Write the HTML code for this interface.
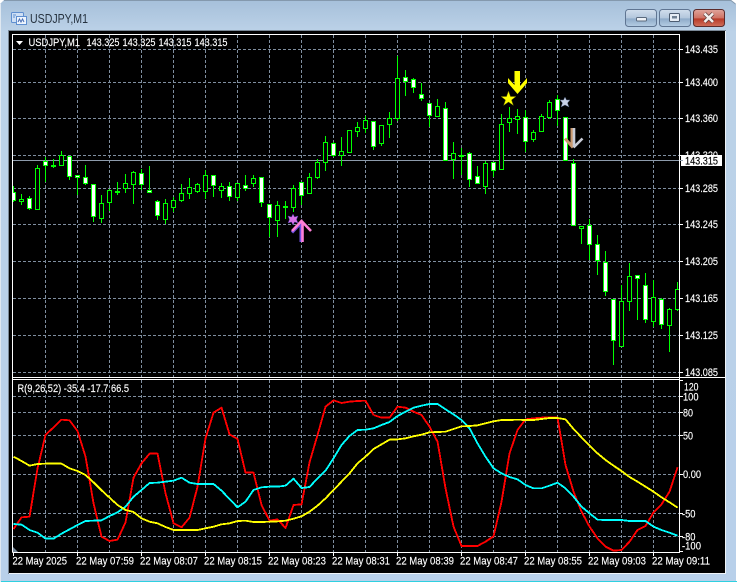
<!DOCTYPE html>
<html><head><meta charset="utf-8"><title>USDJPY,M1</title>
<style>html,body{margin:0;padding:0;background:#fff;overflow:hidden}svg{display:block}
text{font-family:"Liberation Sans",sans-serif;fill:#fff;font-size:11px;stroke:#fff;stroke-width:.15px}</style></head>
<body>
<svg width="737" height="582" viewBox="0 0 737 582" xmlns="http://www.w3.org/2000/svg">
<defs>
<linearGradient id="tb" x1="0" y1="0" x2="0" y2="1"><stop offset="0" stop-color="#a6c0da"/><stop offset=".055" stop-color="#bcd2e8"/><stop offset="1" stop-color="#b8d0ea"/></linearGradient>
<linearGradient id="bt" x1="0" y1="0" x2="0" y2="1"><stop offset="0" stop-color="#d2dfed"/><stop offset=".5" stop-color="#b2c6dc"/><stop offset=".55" stop-color="#8fabc9"/><stop offset="1" stop-color="#b5cde4"/></linearGradient>
<linearGradient id="cl" x1="0" y1="0" x2="0" y2="1"><stop offset="0" stop-color="#e0a59c"/><stop offset=".5" stop-color="#cf7264"/><stop offset=".55" stop-color="#b83a28"/><stop offset="1" stop-color="#d0705c"/></linearGradient>
<clipPath id="m"><rect x="13" y="35" width="666" height="342"/></clipPath>
<clipPath id="s"><rect x="13" y="380" width="666" height="172"/></clipPath>
</defs>
<path d="M4 0H731L736 4V582H0V4Z" fill="url(#tb)"/>
<path d="M4 .5H731L735.5 4" fill="none" stroke="#8499ad"/>
<rect x="0" y="581" width="737" height="1" fill="#2fd0e0"/>
<rect x="0" y="4" width="1" height="578" fill="#dfe8f1"/>
<!-- title icon -->
<rect x="11.5" y="12.5" width="12" height="10" rx="1" fill="#cfe0f5" stroke="#5f8fd0"/>
<rect x="16.5" y="16.5" width="10" height="8" fill="#eef5fd" stroke="#5f8fd0"/>
<path d="M18 22l1.500-3 1.500 3 1.500-3 1.500 3" fill="none" stroke="#4a6fb5"/>
<path d="M13 15h3M13 17h2" stroke="#5f8fd0"/>
<text x="30" y="23" textLength="58" lengthAdjust="spacingAndGlyphs" style="fill:#26323f;stroke:none;font-size:12.5px">USDJPY,M1</text>
<!-- window buttons -->
<rect x="625.500" y="9.500" width="31" height="17" rx="3" fill="url(#bt)" stroke="#5f7592"/>
<rect x="636.500" y="17.500" width="10" height="3.500" rx="1" fill="#eef2f7" stroke="#5a6a7e"/>
<rect x="659.500" y="9.500" width="31" height="17" rx="3" fill="url(#bt)" stroke="#5f7592"/>
<rect x="669.500" y="13.500" width="10" height="8" rx="1" fill="#e6edf5" stroke="#4d5d72"/>
<rect x="672" y="16" width="5" height="2.500" fill="#6f8093"/>
<rect x="693.500" y="9.500" width="31" height="17" rx="3" fill="url(#cl)" stroke="#5c2c2c"/>
<path d="M704.500 13.500l8.500 8.500M713 13.500l-8.500 8.500" stroke="#5b3a3a" stroke-width="4"/>
<path d="M704.500 13.500l8.500 8.500M713 13.500l-8.500 8.500" stroke="#f4f0ee" stroke-width="2.600"/>
<!-- client -->
<rect x="8" y="30" width="718" height="544" fill="#eef3f8"/>
<path d="M8.500 574V30.500H726" fill="none" stroke="#7a8896"/>
<rect x="9" y="31" width="716" height="542" fill="#000"/>
<!-- grid -->
<g stroke="#7f8e9f" fill="none" stroke-dasharray="3 2">
<path d="M13 49.500H679M13 82.500H679M13 118.500H679M13 155.500H679M13 188.500H679M13 224.500H679M13 261.500H679M13 298.500H679M13 335.500H679M13 372.500H679"/>
<path d="M45.500 35V377M77.500 35V377M109.500 35V377M141.500 35V377M173.500 35V377M205.500 35V377M237.500 35V377M269.500 35V377M301.500 35V377M333.500 35V377M365.500 35V377M397.500 35V377M429.500 35V377M461.500 35V377M493.500 35V377M525.500 35V377M557.500 35V377M589.500 35V377M621.500 35V377M653.500 35V377"/>
<path d="M13 396.500H679M13 412.500H679M13 435.500H679M13 474.500H679M13 513.500H679M13 536.500H679"/>
<path d="M45.500 380V552M77.500 380V552M109.500 380V552M141.500 380V552M173.500 380V552M205.500 380V552M237.500 380V552M269.500 380V552M301.500 380V552M333.500 380V552M365.500 380V552M397.500 380V552M429.500 380V552M461.500 380V552M493.500 380V552M525.500 380V552M557.500 380V552M589.500 380V552M621.500 380V552M653.500 380V552"/>
</g>
<path d="M13 160.500H679" stroke="#8d9bab"/>
<!-- candles -->
<g clip-path="url(#m)" shape-rendering="crispEdges" stroke="#0f0">
<path fill="none" d="M13.500 186V202M21.500 194V205M29.500 196V210M37.500 165V210M45.500 157V182M53.500 159V168M61.500 151V156M69.500 156V180M77.500 175V195M85.500 165V185M93.500 184V222M101.500 195V223M109.500 189V211M117.500 182V195M125.500 174V193M133.500 171V204M141.500 169V190M149.500 166V193M157.500 200V220M165.500 199V224M173.500 197V212M181.500 184V202M189.500 178V199M197.500 183V193M205.500 170V199M213.500 175V197M221.500 183V198M229.500 182V201M237.500 183V201M245.500 175V191M253.500 175V187M261.500 177V207M269.500 204V237M277.500 201V237M285.500 201V219M293.500 185V212M301.500 182V205M309.500 173V194M317.500 159V179M325.500 136V171M333.500 142V157M341.500 137V166M349.500 130V153M357.500 122V137M365.500 116V133M373.500 121V150M381.500 125V146M389.500 112V138M397.500 56V121M405.500 70V96M413.500 78V93M421.500 83V101M429.500 103V127M437.500 99V117M445.500 102V161M453.500 142V179M461.500 148V175M469.500 152V187M477.500 166V184M485.500 161V194M493.500 162V177M501.500 114V170M509.500 107V132M517.500 109V134M525.500 110V152M533.500 130V142M541.500 114V132M549.500 100V119M557.500 95V126M565.500 117V161M573.500 159V226M581.500 226V244M589.500 219V260M597.500 235V275M605.500 251V296M613.500 299V365M621.500 285V347M629.500 263V311M637.500 275V320M645.500 273V323M653.500 280V327M661.500 298V329M669.500 308V352M677.500 282V311"/>
<path fill="#fff" d="M11.500 192.500h4v8h-4zM27.500 198.500h4v10h-4zM43.500 161.500h4v4h-4zM67.500 156.500h4v20h-4zM75.500 175.500h4v2h-4zM83.500 177.500h4v6h-4zM91.500 184.500h4v32h-4zM139.500 173.500h4v11h-4zM147.500 190.500h4v2h-4zM155.500 201.500h4v14h-4zM211.500 175.500h4v10h-4zM227.500 186.500h4v10h-4zM243.500 185.500h4v3h-4zM259.500 177.500h4v25h-4zM267.500 204.500h4v13h-4zM299.500 182.500h4v13h-4zM331.500 143.500h4v12h-4zM371.500 121.500h4v25h-4zM403.500 77.500h4v4h-4zM411.500 79.500h4v8h-4zM419.500 94.500h4v4h-4zM427.500 103.500h4v12h-4zM443.500 108.500h4v52h-4zM467.500 153.500h4v26h-4zM475.500 176.500h4v7h-4zM491.500 162.500h4v8h-4zM523.500 117.500h4v24h-4zM555.500 99.500h4v11h-4zM563.500 117.500h4v43h-4zM571.500 163.500h4v62h-4zM587.500 225.500h4v19h-4zM595.500 244.500h4v16h-4zM603.500 262.500h4v29h-4zM611.500 299.500h4v41h-4zM635.500 275.500h4v3h-4zM643.500 285.500h4v34h-4zM659.500 299.500h4v25h-4z"/>
<path fill="#000" d="M19.500 199.500h4v2h-4zM35.500 168.500h4v41h-4zM51.500 165.500h4v1h-4zM59.500 155.500h4v10h-4zM99.500 203.500h4v15h-4zM107.500 190.500h4v12h-4zM115.500 191.500h4v1h-4zM123.500 183.500h4v5h-4zM131.500 172.500h4v12h-4zM163.500 203.500h4v16h-4zM171.500 200.500h4v7h-4zM179.500 193.500h4v7h-4zM187.500 187.500h4v6h-4zM195.500 184.500h4v7h-4zM203.500 175.500h4v16h-4zM219.500 186.500h4v4h-4zM235.500 183.500h4v14h-4zM251.500 178.500h4v5h-4zM275.500 205.500h4v15h-4zM283.500 206.500h4v1h-4zM291.500 188.500h4v19h-4zM307.500 177.500h4v16h-4zM315.500 162.500h4v15h-4zM323.500 142.500h4v20h-4zM339.500 151.500h4v4h-4zM347.500 130.500h4v22h-4zM355.500 127.500h4v4h-4zM363.500 120.500h4v8h-4zM379.500 125.500h4v18h-4zM387.500 118.500h4v6h-4zM395.500 78.500h4v40h-4zM435.500 106.500h4v10h-4zM451.500 153.500h4v6h-4zM459.500 155.500h4v1h-4zM483.500 163.500h4v23h-4zM499.500 124.500h4v45h-4zM507.500 118.500h4v4h-4zM515.500 116.500h4v3h-4zM531.500 132.500h4v7h-4zM539.500 116.500h4v15h-4zM547.500 102.500h4v15h-4zM579.500 226.500h4v2h-4zM619.500 301.500h4v45h-4zM627.500 276.500h4v25h-4zM651.500 297.500h4v24h-4zM667.500 309.500h4v16h-4zM675.500 289.500h4v20h-4z"/>
</g>
<!-- markers -->
<polygon points="514.500,71 520,71 520,86 527,78 527,83 517.500,94 508,83 508,78 514.500,85" fill="#ff0"/>
<polygon points="508.500,91 510.500,96.500 516,96.500 511.500,100 513.500,105.500 508.500,102 503.500,105.500 505.500,100 501,96.500 506.500,96.500" fill="#ff0" stroke="#5c5c00" stroke-width=".5"/>
<polygon points="565,97 566.500,100 570,100 567.500,103 569,107 565,105 561,107 562.500,103 560,100 563.500,100" fill="#c9d2e6" stroke="#4a5a78" stroke-width=".5"/>
<path d="M572 128V147M565 138.500L573 147.500" fill="none" stroke="#c99a70" stroke-width="3"/>
<path d="M574 128V147M573.500 147.500L582.500 138.500" fill="none" stroke="#c9ccd6" stroke-width="2.600"/>
<path d="M292 232.500L301 223V242" fill="none" stroke="#7050e0" stroke-width="3"/>
<path d="M292 231L301.500 221L311 231M302.500 222V242" fill="none" stroke="#ff80d8" stroke-width="2.600"/>
<polygon points="293,214 294.500,217 298,216 296.500,219.500 298,223 294.500,222 293,225 291.500,222 288,223 289.500,219.500 288,216 291.500,217" fill="#d872e6" stroke="#4b3aa8" stroke-width=".5"/>
<!-- indicator -->
<g clip-path="url(#s)" fill="none" stroke-width="5.5" stroke-linejoin="round" shape-rendering="crispEdges">
<g transform="translate(0.200 375) scale(.33333)">
<polyline stroke="#f00" points="40,462 64,427 88,425 112,280 136,180 160,157 184,134 208,136 232,168 256,245 280,385 304,485 328,498 352,494 376,442 400,308 424,265 448,236 472,236 496,355 520,445 544,457 568,428 592,335 616,190 640,113 664,98 688,178 712,192 736,293 760,293 784,390 808,437 832,433 856,459 880,390 904,388 928,262 952,180 976,95 1000,76 1024,84 1048,80 1072,78 1096,77 1120,120"/>
</g>
<g transform="translate(370.200 375) scale(.33333)">
<polyline stroke="#f00" points="10,120 34,128 58,128 82,95 106,98 130,110 154,120 178,155 202,200 226,340 250,455 274,513 298,513 322,513 346,500 370,484 394,380 418,235 442,165 466,133 490,130 514,128 538,128 562,128 586,270 610,350 634,410 658,455 682,490 706,515 730,527 754,525 778,500 802,465 826,453 850,412 874,388 898,350 922,277"/>
</g>
<g transform="translate(0.200 375) scale(.33333)">
<polyline stroke="#0ff" points="40,447 64,449 88,465 112,473 136,491 160,491 184,476 208,463 232,450 256,438 280,437 304,436 328,423 352,412 376,395 400,365 424,345 448,324 472,323 496,320 520,317 544,308 568,323 592,327 616,327 640,327 664,347 688,372 712,397 736,380 760,345 784,337 808,335 832,335 856,332 880,311 904,339 928,336 952,310 976,287 1000,250 1024,210 1048,183 1072,165 1096,164 1120,160"/>
</g>
<g transform="translate(370.200 375) scale(.33333)">
<polyline stroke="#0ff" points="10,160 34,150 58,141 82,123 106,110 130,98 154,92 178,87 202,87 226,103 250,118 274,135 298,160 322,205 346,245 370,280 394,295 418,306 442,313 466,330 490,340 514,340 538,332 562,323 586,340 610,365 634,395 658,415 682,434 706,435 730,435 754,435 778,438 802,438 826,438 850,455 874,465 898,473 922,482"/>
</g>
<g transform="translate(0.200 375) scale(.33333)">
<polyline stroke="#ff0" points="40,245 64,258 88,272 112,267 136,266 160,266 184,266 208,280 232,288 256,300 280,322 304,346 328,368 352,390 376,405 400,411 424,430 448,440 472,445 496,456 520,465 544,465 568,465 592,465 616,460 640,455 664,448 688,445 712,438 736,437 760,441 784,441 808,440 832,439 856,437 880,431 904,424 928,410 952,392 976,370 1000,345 1024,320 1048,295 1072,265 1096,245 1120,222"/>
</g>
<g transform="translate(370.200 375) scale(.33333)">
<polyline stroke="#ff0" points="10,222 34,208 58,194 82,193 106,190 130,184 154,179 178,172 202,171 226,170 250,162 274,154 298,153 322,151 346,145 370,139 394,135 418,135 442,134 466,135 490,135 514,132 538,129 562,129 586,133 610,162 634,187 658,212 682,235 706,255 730,272 754,288 778,306 802,320 826,335 850,350 874,367 898,382 922,398"/>
</g>
</g>
<polygon points="13,547 13,552 18,552" fill="#778899"/>
<!-- frames -->
<g fill="none" stroke="#fff">
<path d="M12.500 552.500V34.500H679.500V552.500H12.500"/>
<path d="M12.500 377.500H725M12.500 379.500H679.500"/>
<path d="M13.500 552V556M77.500 552V556M141.500 552V556M205.500 552V556M269.500 552V556M333.500 552V556M397.500 552V556M461.500 552V556M525.500 552V556M589.500 552V556M653.500 552V556"/>
<path d="M680 49.500h3M680 82.500h3M680 118.500h3M680 155.500h3M680 188.500h3M680 224.500h3M680 261.500h3M680 298.500h3M680 335.500h3M680 372.500h3M680 380.500h3M680 396.500h3M680 412.500h3M680 435.500h3M680 474.500h3M680 513.500h3M680 536.500h3M680 551.500h3"/>
</g>
<polygon points="16,41 23,41 19.500,45" fill="#fff"/>
<!-- header -->
<text x="28.500" y="46" textLength="51.500" lengthAdjust="spacingAndGlyphs">USDJPY,M1</text>
<text x="86.500" y="46" textLength="33" lengthAdjust="spacingAndGlyphs">143.325</text>
<text x="122.500" y="46" textLength="33" lengthAdjust="spacingAndGlyphs">143.325</text>
<text x="158.500" y="46" textLength="33" lengthAdjust="spacingAndGlyphs">143.315</text>
<text x="194.500" y="46" textLength="33" lengthAdjust="spacingAndGlyphs">143.315</text>
<!-- price labels -->
<g>
<text x="685" y="53" textLength="33" lengthAdjust="spacingAndGlyphs">143.435</text>
<text x="685" y="86" textLength="33" lengthAdjust="spacingAndGlyphs">143.400</text>
<text x="685" y="122" textLength="33" lengthAdjust="spacingAndGlyphs">143.360</text>
<text x="685" y="159" textLength="33" lengthAdjust="spacingAndGlyphs">143.320</text>
<text x="685" y="192" textLength="33" lengthAdjust="spacingAndGlyphs">143.285</text>
<text x="685" y="228" textLength="33" lengthAdjust="spacingAndGlyphs">143.245</text>
<text x="685" y="265" textLength="33" lengthAdjust="spacingAndGlyphs">143.205</text>
<text x="685" y="302" textLength="33" lengthAdjust="spacingAndGlyphs">143.165</text>
<text x="685" y="339" textLength="33" lengthAdjust="spacingAndGlyphs">143.125</text>
<text x="685" y="376" textLength="33" lengthAdjust="spacingAndGlyphs">143.085</text>
</g>
<rect x="681" y="155" width="41" height="11" fill="#fff"/>
<path d="M680 160.500h3" stroke="#8d9bab"/>
<text x="685" y="164.500" textLength="33" lengthAdjust="spacingAndGlyphs" style="fill:#000;stroke:#000">143.315</text>
<!-- indicator labels -->
<text x="17.500" y="392" textLength="111.500" lengthAdjust="spacingAndGlyphs">R(9,26,52) -35.4 -17.7 66.5</text>
<text x="684" y="390.500" textLength="14.500" lengthAdjust="spacingAndGlyphs">120</text>
<text x="683" y="400.500" textLength="15.500" lengthAdjust="spacingAndGlyphs">100</text>
<text x="683" y="416.500" textLength="10" lengthAdjust="spacingAndGlyphs">80</text>
<text x="683" y="439.500" textLength="10" lengthAdjust="spacingAndGlyphs">50</text>
<text x="683" y="478" textLength="18" lengthAdjust="spacingAndGlyphs">0.00</text>
<text x="682" y="517.500" textLength="13.500" lengthAdjust="spacingAndGlyphs">-50</text>
<text x="682" y="540.500" textLength="13.500" lengthAdjust="spacingAndGlyphs">-80</text>
<text x="682" y="549.500" textLength="19" lengthAdjust="spacingAndGlyphs">-100</text>
<!-- time labels -->
<text x="12.500" y="564.500" textLength="54.500" lengthAdjust="spacingAndGlyphs">22 May 2025</text>
<text x="76" y="564.500" textLength="58" lengthAdjust="spacingAndGlyphs">22 May 07:59</text>
<text x="140" y="564.500" textLength="58" lengthAdjust="spacingAndGlyphs">22 May 08:07</text>
<text x="204" y="564.500" textLength="58" lengthAdjust="spacingAndGlyphs">22 May 08:15</text>
<text x="268" y="564.500" textLength="58" lengthAdjust="spacingAndGlyphs">22 May 08:23</text>
<text x="332" y="564.500" textLength="58" lengthAdjust="spacingAndGlyphs">22 May 08:31</text>
<text x="396" y="564.500" textLength="58" lengthAdjust="spacingAndGlyphs">22 May 08:39</text>
<text x="460" y="564.500" textLength="58" lengthAdjust="spacingAndGlyphs">22 May 08:47</text>
<text x="524" y="564.500" textLength="58" lengthAdjust="spacingAndGlyphs">22 May 08:55</text>
<text x="588" y="564.500" textLength="58" lengthAdjust="spacingAndGlyphs">22 May 09:03</text>
<text x="652" y="564.500" textLength="58" lengthAdjust="spacingAndGlyphs">22 May 09:11</text>
</svg>
</body></html>
